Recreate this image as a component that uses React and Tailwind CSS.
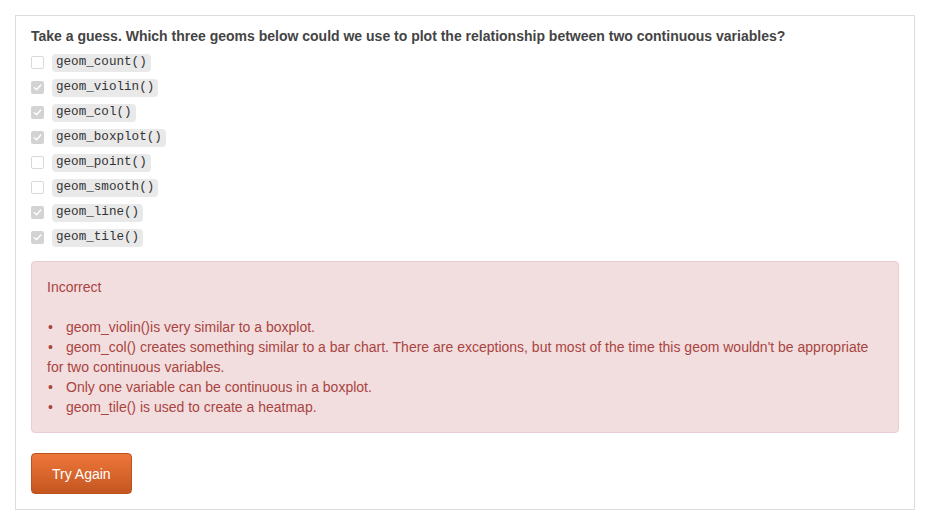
import { useState } from 'react'

const options = [
  { label: 'geom_count()', checked: false },
  { label: 'geom_violin()', checked: true },
  { label: 'geom_col()', checked: true },
  { label: 'geom_boxplot()', checked: true },
  { label: 'geom_point()', checked: false },
  { label: 'geom_smooth()', checked: false },
  { label: 'geom_line()', checked: true },
  { label: 'geom_tile()', checked: true },
]

const feedback = [
  'geom_violin()is very similar to a boxplot.',
  "geom_col() creates something similar to a bar chart. There are exceptions, but most of the time this geom wouldn't be appropriate for two continuous variables.",
  'Only one variable can be continuous in a boxplot.',
  'geom_tile() is used to create a heatmap.',
]

function Box({ checked }) {
  if (checked) {
    return (
      <span className="w-[13px] h-[13px] rounded-[2px] bg-[#d3d3d3] flex items-center justify-center">
        <svg width="9" height="9" viewBox="0 0 10 10" fill="none">
          <path d="M1.5 5.2 L4 7.6 L8.6 2.2" stroke="#fff" strokeWidth="1.6" strokeLinecap="round" strokeLinejoin="round" />
        </svg>
      </span>
    )
  }
  return <span className="w-[13px] h-[13px] rounded-[2px] bg-white border border-[#d9d9d9]" />
}

export default function App() {
  const [items] = useState(options)

  return (
    <div className="min-h-screen bg-white pt-[15px] pl-[15px] font-['Liberation_Sans',Arial,sans-serif] text-[14px] text-[#333]">
      <div className="w-[900px] border border-[#dcdcdc] px-[15px] pt-[10px] pb-[15px]">
        <div className="font-bold text-[#444] leading-[20px] mb-[4px]">
          Take a guess. Which three geoms below could we use to plot the relationship between two continuous variables?
        </div>

        <div>
          {items.map((o) => (
            <div key={o.label} className="h-[25px] flex items-center gap-[8px]">
              <Box checked={o.checked} />
              <code className="bg-[#e9e9e9] rounded-[4px] px-[4px] h-[18px] flex items-center font-['Liberation_Mono','Courier_New',monospace] text-[12.6px] text-[#333]">
                {o.label}
              </code>
            </div>
          ))}
        </div>

        {/* Feedback */}
        <div className="mt-[11px] bg-[#f2dede] border border-[#ebccd1] rounded-[4px] p-[15px] text-[#a94442] leading-[20px]">
          <p className="mb-[20px]">Incorrect</p>
          <div>
            {feedback.map((f) => (
              <div key={f}>
                <span className="inline-block w-[19px] pl-[1px]">•</span>
                {f}
              </div>
            ))}
          </div>
        </div>

        <button className="mt-[20px] h-[41px] px-[20px] rounded-[4px] border border-[#b9521d] bg-gradient-to-b from-[#ee773b] to-[#c4561f] text-white text-[14px] leading-[20px]">
          Try Again
        </button>
      </div>
    </div>
  )
}
